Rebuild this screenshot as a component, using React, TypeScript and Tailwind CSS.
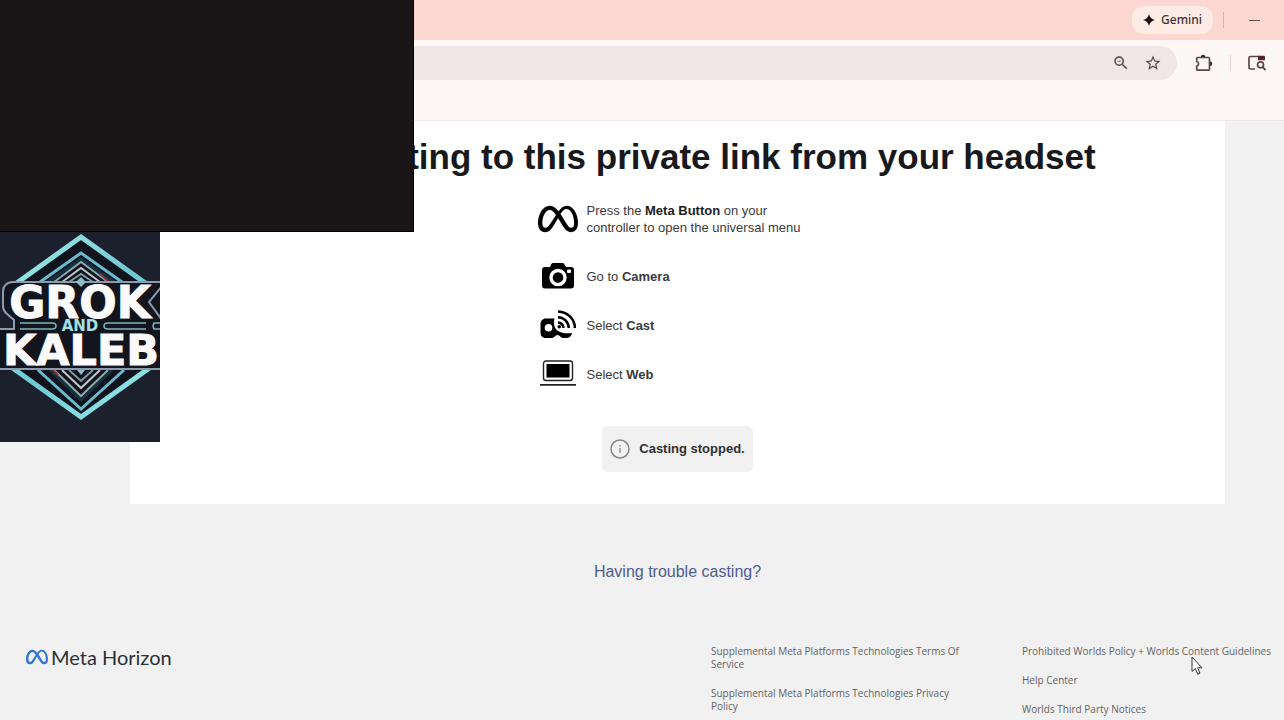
import type { ReactNode } from "react";
import { FaMeta } from "react-icons/fa6";
import { MdStarBorder, MdZoomOut } from "react-icons/md";

function SparkIcon() {
  return (
    <svg viewBox="0 0 24 24" className="w-3 h-3" fill="#1d1113">
      <path d="M12 0c1.500 6.500 5.500 10.500 12 12-6.500 1.500-10.500 5.500-12 12-1.500-6.500-5.500-10.500-12-12C6.500 10.500 10.500 6.500 12 0z" />
    </svg>
  );
}

function PuzzleIcon() {
  return (
    <svg viewBox="0 0 20 20" className="w-5 h-5">
      <path
        d="M3.500 4.500h11a1 1 0 0 1 1 1v10.700a1 1 0 0 1-1 1h-11a.8.8 0 0 1-.8-.8v-3.200a2.400 2.400 0 0 0 0-4.700V5.300a.8.8 0 0 1 .8-.8z"
        fill="none"
        stroke="#5c4547"
        strokeWidth="1.700"
      />
      <path d="M6.800 4a2.300 2.300 0 0 1 4.600 0zM16 8.500a2.300 2.300 0 0 1 0 4.600z" fill="#3f2a2c" />
    </svg>
  );
}

function PanelSearchIcon() {
  return (
    <svg viewBox="0 0 20 18" className="w-5 h-[18px]" fill="none">
      <path
        d="M8 15H3.500A1.500 1.500 0 0 1 2 13.500V4a1.500 1.500 0 0 1 1.500-1.500H12"
        stroke="#5c4547"
        strokeWidth="1.700"
      />
      <path d="M11 1.700h6a1 1 0 0 1 1 1V6.200h-7z" fill="#57262a" />
      <circle cx="13.500" cy="10.800" r="3" stroke="#5c4547" strokeWidth="1.700" />
      <path d="M15.500 13 18.500 16" stroke="#5c4547" strokeWidth="1.800" />
    </svg>
  );
}

function CameraIcon() {
  return (
    <svg viewBox="0 0 34 28" className="w-[34px] h-7">
      <path
        d="M9 5l1.500-3.200A2 2 0 0 1 12.300 1h9a2 2 0 0 1 1.800.8L25 5h5a3 3 0 0 1 3 3v15.500a3 3 0 0 1-3 3H4a3 3 0 0 1-3-3V8a3 3 0 0 1 3-3z"
        fill="#000"
      />
      <circle cx="17" cy="15.500" r="7" fill="#000" stroke="#fff" strokeWidth="3.400" />
      <rect x="26" y="7.500" width="4" height="3.500" rx="1" fill="#fff" />
    </svg>
  );
}

function CastIcon() {
  return (
    <svg viewBox="0 0 36 30" className="w-9 h-[30px]">
      <path
        d="M6 8.500h8.500c-1.500 5 0 10 3.500 12.500 4 2.500 9 2.500 14 2-.5 3-2.500 5-6 5h-3c-2.500 0-3-3-5.500-3s-3 3-5.500 3H6c-4 0-5.500-2.500-5.500-6V14c0-3 2-5.500 5.500-5.500z"
        fill="#000"
      />
      <circle cx="8.500" cy="17.800" r="3.800" fill="#fff" />
      <g fill="none" stroke="#000" strokeWidth="2.500">
        <path d="M18 1.500C27.500 2 34.500 8.500 35 18" />
        <path d="M18 7.200c6 .3 10.500 4.800 10.800 10.800" />
        <path d="M18 12.500c3.300.3 5.200 2.300 5.500 5.500" />
      </g>
      <circle cx="19.300" cy="16.800" r="1.800" fill="#000" />
    </svg>
  );
}

function LaptopIcon() {
  return (
    <svg viewBox="0 0 36 28" className="w-9 h-7">
      <rect x="3.500" y="1" width="29" height="19.500" rx="2.500" fill="none" stroke="#222" strokeWidth="1.400" />
      <rect x="6.500" y="4" width="23" height="13.500" fill="#000" />
      <path d="M0 24.800h36" stroke="#222" strokeWidth="1.700" />
    </svg>
  );
}

function InfoIcon() {
  return (
    <svg viewBox="0 0 20 20" className="w-5 h-5 shrink-0" fill="none" stroke="#858585">
      <circle cx="10" cy="10" r="9" strokeWidth="1.500" />
      <path d="M10 9v5M10 6v1.500" strokeWidth="1.300" />
    </svg>
  );
}

const steps: { icon: ReactNode; text: ReactNode; tall?: boolean }[] = [
  {
    icon: <FaMeta className="w-10 h-10" />,
    text: (
      <>
        Press the <b className="text-[#1c1c1c]">Meta Button</b> on your
        <br />
        controller to open the universal menu
      </>
    ),
    tall: true,
  },
  { icon: <CameraIcon />, text: <>Go to <b>Camera</b></> },
  { icon: <CastIcon />, text: <>Select <b>Cast</b></> },
  { icon: <LaptopIcon />, text: <>Select <b>Web</b></> },
];

const legalLinks = [
  "Supplemental Meta Platforms Technologies Terms Of Service",
  "Supplemental Meta Platforms Technologies Privacy Policy",
];

const helpLinks = [
  "Prohibited Worlds Policy + Worlds Content Guidelines",
  "Help Center",
  "Worlds Third Party Notices",
];

function BrowserChrome() {
  return (
    <header className="border-b border-[#eee6e4] bg-[#fdf8f5]">
      <div className="flex h-10 items-center justify-end bg-[#fcd7d1] pr-6">
        <button className="flex h-7 items-center gap-[6px] rounded-xl bg-[#fdebe5] px-[11px] font-['Noto_Sans',sans-serif] text-xs font-medium text-[#41302f]">
          <SparkIcon />
          Gemini
        </button>
        <span className="ml-[10px] h-4 w-px bg-[#e8a5a2]" />
        <button aria-label="Minimize" className="ml-[25px] flex h-6 w-[11px] items-center">
          <span className="h-px w-full bg-[#76504f]" />
        </button>
      </div>
      <div className="flex h-[46px] items-center pr-[17px] text-[#5c4547]">
        <div className="flex h-[34px] flex-1 items-center gap-[14px] rounded-r-full bg-[#f0e5e7] pr-[15px]">
          <input aria-label="Address" className="h-full flex-1 bg-transparent outline-none" />
          <button aria-label="Zoom out">
            <MdZoomOut className="w-[18px] h-[18px]" />
          </button>
          <button aria-label="Bookmark">
            <MdStarBorder className="w-[18px] h-[18px]" />
          </button>
        </div>
        <button aria-label="Extensions" className="ml-[17px]">
          <PuzzleIcon />
        </button>
        <span className="ml-4 h-4 w-px bg-[#f3d9d7]" />
        <button aria-label="Search panel" className="ml-4">
          <PanelSearchIcon />
        </button>
      </div>
      <div className="h-[34px]" />
    </header>
  );
}

function ChannelLogo() {
  return (
    <svg viewBox="0 0 160 210" className="block w-40 h-[210px] bg-[#1c202c]">
      <defs>
        <linearGradient id="edge" x1="0" y1="0" x2="1" y2="1">
          <stop offset="0" stopColor="#a6eeea" />
          <stop offset="0.5" stopColor="#6fc9d3" />
          <stop offset="1" stopColor="#9deeee" />
        </linearGradient>
      </defs>
      <path d="M81 5 162 63v64L81 185 0 127V63z" fill="#11141d" stroke="url(#edge)" strokeWidth="5" />
      <g fill="none" strokeWidth="2">
        <path d="M40 50 81 21l41 29M38 138l43 39 43-39" stroke="#69b9cf" strokeWidth="3" />
        <path d="M48 50 81 27l33 23M50 138l31 30 31-30" stroke="#15333f" strokeWidth="3" />
        <path d="M54 50 81 30l27 20M54 138l27 26 27-26" stroke="#8fa7b0" />
        <path d="M62 50 81 36l19 14M62 138l19 18 19-18" stroke="#bcc5cc" />
        <path d="M69 50 81 42l12 8M69 138l12 11 12-11" stroke="#789aa6" />
        <path d="M100 42l9 8M53 138l5 5" stroke="#8d3338" />
      </g>
      <rect x="0" y="50" width="16" height="48" fill="#1c202c" />
      <path
        d="M166 50H12Q3 51 3 60V74Q3 78 6 81L14 88V97H-4V137H166"
        fill="#12151e"
        stroke="#8d9aac"
        strokeWidth="2"
      />
      <path d="M81 45l5 5-5 5-5-5z" fill="#8bbdc5" />
      <path d="M81 143l-4-5h8z" fill="#8bbdc5" />
      <path d="M162 54 149 70l13 18" fill="none" stroke="#8d9aac" strokeWidth="2" />
      <g fill="none" stroke="#7fb4bd" strokeWidth="1.500">
        <path d="M20 91h32q4 0 4 3t-4 3H20M146 91h-38q-4 0-4 3t4 3h38" />
        <path d="M162 91h-8l-1 3 1 3h8" />
      </g>
      <g
        fontFamily="'DejaVu Sans', sans-serif"
        fontWeight="700"
        fill="#fafafa"
        stroke="#fafafa"
        strokeWidth="1"
        textAnchor="middle"
      >
        <text x="80" y="86" fontSize="44">GROK</text>
        <text x="81" y="133" fontSize="43">KALEB</text>
        <text x="80" y="99" fontSize="15" fill="#a4e0e4" stroke="none">AND</text>
      </g>
    </svg>
  );
}

function FooterList({ links }: { links: string[] }) {
  return (
    <ul className="flex flex-col gap-4">
      {links.map((link) => (
        <li key={link}>
          <a href="#" className="block">{link}</a>
        </li>
      ))}
    </ul>
  );
}

export default function App() {
  return (
    <div className="relative min-h-screen overflow-hidden bg-[#f1f1f1] font-['Liberation_Sans',Arial,sans-serif]">
      <BrowserChrome />

      <main className="pl-[130px] pr-[59px]">
        <section className="flex flex-col items-center bg-white pt-4 pb-8">
          <h1 className="text-[35px] leading-10 font-bold whitespace-nowrap text-[#17191c]">
            Start casting to this private link from your headset
          </h1>
          <ul className="mt-[18px] flex w-[280px] flex-col gap-[17px] text-[13px] leading-[17px] text-[#3a3a3a]">
            {steps.map((step, i) => (
              <li key={i} className={step.tall ? "flex h-12 items-center gap-[9px]" : "flex h-8 items-center gap-[9px]"}>
                <span className="flex w-10 shrink-0 justify-center text-black">{step.icon}</span>
                <p className="whitespace-nowrap">{step.text}</p>
              </li>
            ))}
          </ul>
          <div
            role="status"
            className="mt-9 flex h-[46px] items-center gap-[9px] rounded-md bg-[#f1f1f1] px-2 text-[13px] font-bold text-[#303030]"
          >
            <InfoIcon />
            Casting stopped.
          </div>
        </section>
        <p className="mt-14 text-center">
          <a href="#" className="text-base text-[#4e5c8f]">Having trouble casting?</a>
        </p>
      </main>

      <footer className="mt-[61px] flex justify-between pl-[26px] pr-[14px]">
        <a href="#" className="flex h-6 items-center gap-[3px] font-['Lato',sans-serif] text-xl text-[#2b3136]">
          <FaMeta className="w-[22px] h-[22px] text-[#2f72d8]" />
          Meta Horizon
        </a>
        <nav className="flex gap-[57px] font-['Open_Sans',sans-serif] text-[10px] leading-[13px] text-[#626262]">
          <div className="w-[254px]">
            <FooterList links={legalLinks} />
          </div>
          <div className="w-[248px] whitespace-nowrap">
            <FooterList links={helpLinks} />
          </div>
        </nav>
      </footer>

      {/* stream overlays */}
      <div className="absolute top-0 left-0">
        <div className="h-[232px] w-[414px] border-r border-b border-black bg-[#1a1618]" />
        <ChannelLogo />
      </div>
      <svg viewBox="0 0 12 20" className="absolute top-[656px] left-[1191px] w-3 h-5">
        <path
          d="M1 1v14.500l3.400-3 2.300 5.700 2.300-1-2.300-5.400H11z"
          fill="#fff"
          stroke="#333"
          strokeWidth="1"
        />
      </svg>
    </div>
  );
}
